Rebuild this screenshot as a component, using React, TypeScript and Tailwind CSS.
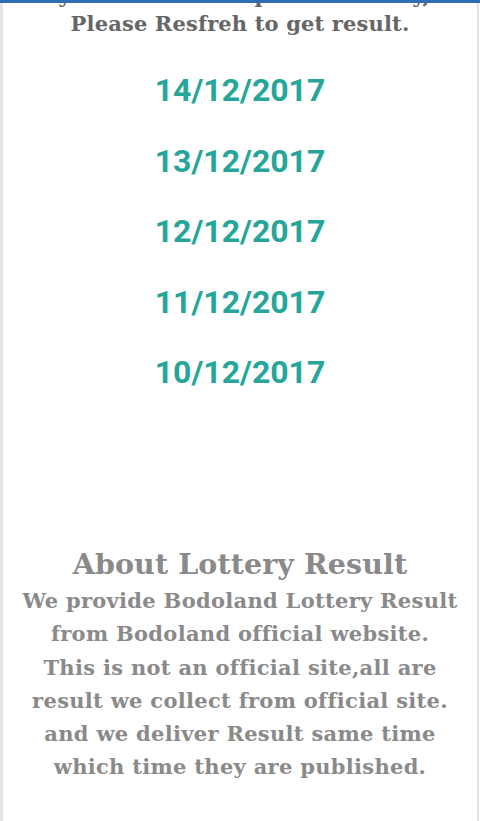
import React from "react";

const dates = ["14/12/2017", "13/12/2017", "12/12/2017", "11/12/2017", "10/12/2017"];

export default function App() {
  const serif = { fontFamily: '"DejaVu Serif", "Liberation Serif", serif' } as React.CSSProperties;
  return (
    <div className="w-[480px] h-[821px] overflow-hidden bg-white flex flex-col">
      <div className="h-[3px] bg-[#2f6db5] shrink-0" />
      <div className="flex-1 flex border-l-[3px] border-l-[#e6e6e6] mr-[1px] border-r-[2px] border-r-[#e3e3e3]">
        <div className="flex-1 flex flex-col items-center overflow-hidden">
          <div className="h-[6px] w-full overflow-hidden relative">
            <p
              className="absolute left-0 right-0 bottom-0 text-center text-[21px] font-bold text-[#666] whitespace-nowrap leading-[26px]"
              style={serif}
            >
              Today result will be updated shortly, Please wait and try again, Sorry
            </p>
          </div>
          <p className="text-[21px] font-bold text-[#666] leading-[26px] mt-[2px] tracking-[0.15px]" style={serif}>
            Please Resfreh to get result.
          </p>
          <div className="flex flex-col items-center mt-[33px] gap-[30.5px]">
            {dates.map((d) => (
              <div
                key={d}
                className="text-[32px] leading-[40px] font-bold text-[#26a69a]"
                style={{ fontFamily: 'Roboto, "Liberation Sans", sans-serif' }}
              >
                {d}
              </div>
            ))}
          </div>
          <div className="flex flex-col items-center mt-[154px] text-[#8a8a8a]" style={serif}>
            <h2 className="text-[28.5px] font-bold leading-[36px] tracking-[0.1px]">About Lottery Result</h2>
            <p className="text-[21px] font-bold leading-[33.3px] mt-[2px] text-center tracking-[0.3px] whitespace-nowrap">
              We provide Bodoland Lottery Result
              <br />
              from Bodoland official website.
              <br />
              This is not an official site,all are
              <br />
              result we collect from official site.
              <br />
              and we deliver Result same time
              <br />
              which time they are published.
            </p>
          </div>
        </div>
      </div>
    </div>
  );
}
